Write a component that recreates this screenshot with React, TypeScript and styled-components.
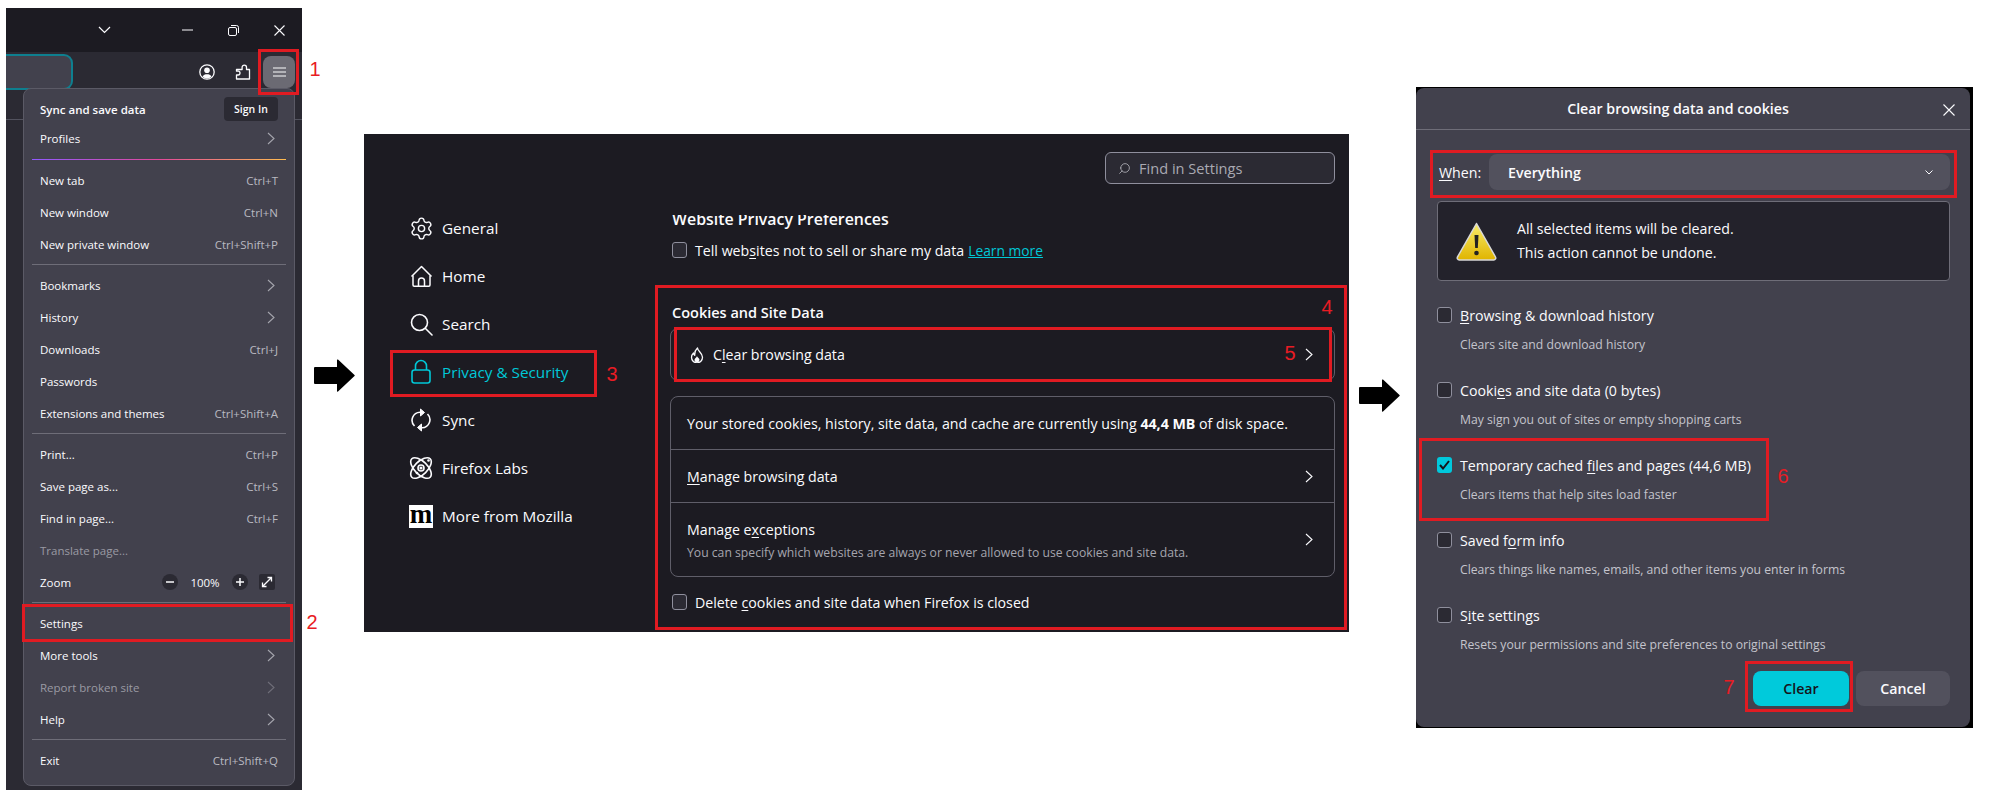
import React from "react"
import styled, { createGlobalStyle } from "styled-components"
import { Settings, Search } from "lucide-react"

const Global = createGlobalStyle`
    html, body { margin: 0; padding: 0; background: #fff; }
    * { box-sizing: border-box; }
    u { text-underline-offset: 2px; text-decoration-thickness: 1px; }
`

const Page = styled.div`
    position: relative;
    width: 1991px;
    height: 798px;
    overflow: hidden;
    display: flex;
    align-items: flex-start;
    padding-left: 6px;
    background: #fff;
    font-family: "Open Sans", "Noto Sans", sans-serif;
    color: #fbfbfe;
`

const Arrow = styled.svg<{ $left: number; $top: number }>`
    flex: none;
    width: 41px;
    height: 33px;
    margin-left: ${p => p.$left}px;
    margin-top: ${p => p.$top}px;
`

/* browser window with the open menu */
const Browser = styled.div`
    position: relative;
    flex: none;
    width: 296px;
    height: 782px;
    margin-top: 8px;
    background: #2b2a33;
`

const TitleBar = styled.div`
    height: 44px;
    background: #1c1b22;
    display: flex;
    justify-content: flex-end;
    align-items: center;
`

const WinButton = styled.div<{ $gap?: number }>`
    width: 46px;
    height: 44px;
    display: flex;
    align-items: center;
    justify-content: center;
    margin-right: ${p => p.$gap || 0}px;
`

const ToolBar = styled.div`
    height: 68px;
    display: flex;
    align-items: flex-start;
    gap: 4px;
    padding-right: 7px;
    border-bottom: 1px solid #52525e;
`

const UrlBar = styled.div`
    width: 67px;
    height: 36px;
    margin-top: 2px;
    margin-right: auto;
    background: #42414d;
    border: 2px solid #0e7f8f;
    border-left: 0;
    border-radius: 0 9px 9px 0;
`

const ToolButton = styled.div<{ $active?: boolean }>`
    width: 32px;
    height: 32px;
    margin-top: 4px;
    display: flex;
    align-items: center;
    justify-content: center;
    border-radius: 8px;
    background: ${p => p.$active ? "#6b6a73" : "transparent"};
`

const Menu = styled.div`
    position: absolute;
    left: 17px;
    top: 80px;
    width: 272px;
    height: 698px;
    padding: 7px 0 0;
    background: #42414d;
    border: 1px solid #5b5a66;
    border-radius: 8px;
    font-size: 11.5px;
`

const MenuRow = styled.div<{ $compact?: boolean; $muted?: boolean }>`
    height: ${p => p.$compact ? 29 : 32}px;
    padding: 0 16px 2px;
    display: flex;
    align-items: center;
    justify-content: space-between;
    color: ${p => p.$muted ? "#9a9aa3" : "#fbfbfe"};
`

const MenuGroup = styled.div`
    padding-bottom: 2px;
`

const Strong = styled.span`
    font-weight: 600;
`

const SignIn = styled.div`
    width: 54px;
    height: 24px;
    margin-top: -1px;
    background: #2b2a33;
    border-radius: 4px;
    font-size: 10.5px;
    font-weight: 600;
    display: flex;
    align-items: center;
    justify-content: center;
`

const Shortcut = styled.span`
    color: #b9b9c1;
`

const MenuChevron = styled.span`
    display: flex;
    margin-right: 3px;
`

const MenuSep = styled.div<{ $rainbow?: boolean }>`
    height: 1px;
    margin: 3px 8px 5px;
    background: ${p => p.$rainbow
        ? "linear-gradient(90deg, #9059ff, #e2489b 50%, #ffbd4f)"
        : "#6e6d78"};
`

const ZoomControls = styled.div`
    display: flex;
    align-items: center;
`

const RoundButton = styled.div`
    width: 16px;
    height: 16px;
    border-radius: 50%;
    background: #2b2a33;
    display: flex;
    align-items: center;
    justify-content: center;
`

const ZoomValue = styled.span`
    width: 54px;
    text-align: center;
`

const ExpandButton = styled.div`
    width: 16px;
    height: 16px;
    margin-left: 11px;
    margin-right: 3px;
    border-radius: 2px;
    background: #2b2a33;
    display: flex;
    align-items: center;
    justify-content: center;
`

/* settings page */
const SettingsPage = styled.div`
    flex: none;
    width: 985px;
    height: 498px;
    margin-left: 9px;
    margin-top: 134px;
    background: #1c1b22;
    display: flex;
`

const Sidebar = styled.div`
    flex: none;
    width: 308px;
    padding: 70px 0 0 46px;
`

const NavItem = styled.div<{ $active?: boolean }>`
    height: 48px;
    display: flex;
    align-items: center;
    gap: 10px;
    font-size: 15.3px;
    color: ${p => p.$active ? "#00c8d7" : "#fbfbfe"};
`

const NavIcon = styled.div`
    flex: none;
    width: 22px;
    height: 24px;
    display: flex;
    align-items: center;
    justify-content: center;
    svg { flex: none; }
`

const MozBox = styled.div`
    flex: none;
    width: 24px;
    height: 23px;
    background: #fff;
    color: #000;
    font-family: "Liberation Serif", serif;
    font-weight: 700;
    font-size: 27px;
    line-height: 19px;
    text-align: center;
`

const Content = styled.div`
    flex: 1;
    padding: 18px 14px 0 0;
    display: flex;
    flex-direction: column;
    font-size: 14.2px;
`

const FindBox = styled.div`
    align-self: flex-end;
    width: 230px;
    height: 32px;
    padding-left: 12px;
    display: flex;
    align-items: center;
    gap: 8px;
    background: #2b2a33;
    border: 1px solid #8f8f9d;
    border-radius: 6px;
    color: #a9a9b2;
    font-size: 14.6px;
`

const FindIcon = styled(Search)`
    transform: scaleX(-1);
`

const SectionTitle = styled.div<{ $top: number; $size?: number; $clip?: boolean }>`
    height: 22px;
    margin-top: ${p => p.$top}px;
    line-height: 22px;
    font-size: ${p => p.$size || 14.5}px;
    font-weight: 600;
    clip-path: ${p => p.$clip ? "inset(7px 0 0 0)" : "none"};
`

const CheckRow = styled.div<{ $top: number }>`
    height: 22px;
    margin-top: ${p => p.$top}px;
    display: flex;
    align-items: center;
    gap: 8px;
`

const Box = styled.div<{ $checked?: boolean }>`
    flex: none;
    width: 15px;
    height: 16px;
    border-radius: 3px;
    display: flex;
    align-items: center;
    justify-content: center;
    background: ${p => p.$checked ? "#00c8dc" : "#2b2a33"};
    border: ${p => p.$checked ? "0" : "1px solid #8f8f9d"};
`

const Link = styled.a`
    color: #00c8d7;
    font-size: 13.8px;
    text-decoration: underline;
    margin-left: 4px;
`

const Card = styled.div<{ $top: number }>`
    margin-top: ${p => p.$top}px;
    margin-left: -2px;
    border: 1px solid #5f5e69;
    border-radius: 8px;
`

const CardRow = styled.div<{ $height: number; $line?: boolean }>`
    height: ${p => p.$height}px;
    padding: 0 21px 0 16px;
    display: flex;
    align-items: center;
    justify-content: space-between;
    border-bottom: ${p => p.$line ? "1px solid #5f5e69" : "0"};
`

const CardLabel = styled.div`
    display: flex;
    align-items: center;
    gap: 9px;
    padding-left: 3px;
`

const CardStack = styled.div`
    padding-top: 2px;
`

const Bold = styled.b`
    font-weight: 700;
`

const CardSub = styled.div`
    margin-top: 5px;
    font-size: 12.2px;
    color: #a5a5ae;
`

/* clear data dialog */
const DialogFrame = styled.div`
    flex: none;
    width: 557px;
    height: 641px;
    margin-left: 16px;
    margin-top: 87px;
    padding: 1px 3px 1px 0;
    background: #000;
`

const Dialog = styled.div`
    height: 100%;
    background: #42414d;
    border-radius: 8px;
    display: flex;
    flex-direction: column;
    font-size: 14.2px;
`

const DialogHead = styled.div`
    position: relative;
    flex: none;
    height: 42px;
    padding-right: 30px;
    display: flex;
    align-items: center;
    justify-content: center;
    border-bottom: 1px solid #6e6d78;
    font-size: 14.2px;
    font-weight: 600;
`

const CloseIcon = styled.svg`
    position: absolute;
    right: 15px;
    top: 16px;
`

const DialogBody = styled.div`
    flex: 1;
    padding: 24px 20px 0 21px;
    display: flex;
    flex-direction: column;
`

const WhenRow = styled.div`
    display: flex;
    align-items: center;
    height: 36px;
`

const WhenLabel = styled.span`
    width: 52px;
    padding-left: 2px;
`

const Select = styled.div`
    flex: 1;
    height: 36px;
    padding: 0 17px 0 19px;
    display: flex;
    align-items: center;
    justify-content: space-between;
    background: #52515d;
    border-radius: 8px;
    font-weight: 600;
`

const Warning = styled.div`
    height: 80px;
    margin-top: 11px;
    padding-left: 18px;
    display: flex;
    align-items: center;
    gap: 20px;
    background: #23222b;
    border: 1px solid #6e6d78;
    border-radius: 4px;
    line-height: 24px;
`

const ClearList = styled.div`
    margin-top: 23px;
    display: flex;
    flex-direction: column;
    gap: 26px;
`

const ClearItem = styled.div`
    height: 49px;
`

const ClearLabel = styled.div`
    height: 22px;
    display: flex;
    align-items: center;
    gap: 8px;
`

const ClearSub = styled.div`
    height: 18px;
    margin-top: 10px;
    margin-left: 23px;
    line-height: 18px;
    font-size: 12.2px;
    color: #c4c4cc;
`

const Buttons = styled.div`
    margin-top: 18px;
    display: flex;
    justify-content: flex-end;
    gap: 7px;
`

const Button = styled.div<{ $primary?: boolean }>`
    width: ${p => p.$primary ? 96 : 94}px;
    height: 35px;
    border-radius: 8px;
    display: flex;
    align-items: center;
    justify-content: center;
    font-weight: 600;
    background: ${p => p.$primary ? "#00cadb" : "#52515d"};
    color: ${p => p.$primary ? "#15141a" : "#fbfbfe"};
`

/* red annotations drawn on top of the screenshots */
const RedBox = styled.div<{ $x: number; $y: number; $w: number; $h: number }>`
    position: absolute;
    left: ${p => p.$x}px;
    top: ${p => p.$y}px;
    width: ${p => p.$w}px;
    height: ${p => p.$h}px;
    border: 3px solid #e01b22;
`

const Marker = styled.span<{ $x: number; $y: number }>`
    position: absolute;
    left: ${p => p.$x}px;
    top: ${p => p.$y}px;
    transform: translate(-50%, -50%);
    font-family: "Liberation Sans", Arial, sans-serif;
    font-size: 20px;
    line-height: 20px;
    color: #e81c24;
`

const redBoxes = [
    [258, 49, 41, 46],
    [22, 604, 271, 38],
    [390, 350, 207, 47],
    [655, 285, 692, 345],
    [674, 327, 658, 55],
    [1430, 150, 527, 48],
    [1419, 438, 350, 83],
    [1745, 661, 108, 51],
]

const markers = [
    ["1", 315, 69],
    ["2", 312, 622],
    ["3", 612, 374],
    ["4", 1327, 307],
    ["5", 1290, 353],
    ["6", 1783, 476],
    ["7", 1729, 687],
] as const

const Chevron = ({ color = "#a5a5ad", w = 8, h = 13 }: { color?: string; w?: number; h?: number }) => (
    <svg width={w} height={h} viewBox="0 0 8 13" fill="none">
        <path d="M1 1l6 5.5L1 12" stroke={color} strokeWidth="1.1" />
    </svg>
)

const ArrowShape = () => <path d="M1 8h22V1q0-1 1-.4L40.5 16a.7.7 0 0 1 0 1L24 32.4q-1 .6-1-.4V25H1q-1 0-1-1V9q0-1 1-1z" fill="#000" />

const ShortcutRow = ({ label, keys, muted }: { label: string; keys?: string; muted?: boolean }) => (
    <MenuRow $muted={muted}>
        <span>{label}</span>
        {keys && <Shortcut>{keys}</Shortcut>}
    </MenuRow>
)

const SubmenuRow = ({ label, muted, compact }: { label: string; muted?: boolean; compact?: boolean }) => (
    <MenuRow $muted={muted} $compact={compact}>
        <span>{label}</span>
        <MenuChevron><Chevron color={muted ? "#6f6e79" : "#a5a5ad"} /></MenuChevron>
    </MenuRow>
)

const GeneralIcon = () => <Settings size={25} strokeWidth={1.35} color="#fbfbfe" />

const HomeIcon = () => (
    <svg width="23" height="23" viewBox="0 0 23 23" fill="none" stroke="#fbfbfe" strokeWidth="1.5" strokeLinejoin="round">
        <path d="M1.5 11.5L11.5 1.5l10 10" />
        <path d="M3 10.5V20a1.2 1.2 0 0 0 1.2 1.2h14.6A1.2 1.2 0 0 0 20 20v-9.500" />
        <path d="M8.500 21v-5a3 3 0 0 1 6 0v5" />
    </svg>
)

const SearchIcon = () => (
    <svg width="23" height="23" viewBox="0 0 23 23" fill="none" stroke="#fbfbfe" strokeWidth="1.6">
        <circle cx="9.500" cy="9.500" r="8" />
        <path d="M15.500 15.500l6.500 6.500" strokeLinecap="round" />
    </svg>
)

const LockIcon = () => (
    <svg width="22" height="26" viewBox="0 0 22 26" fill="none" stroke="#00c8d7" strokeWidth="1.6">
        <path d="M5.500 11V7a5.500 5.500 0 0 1 11 0v4" />
        <rect x="2" y="11" width="18" height="13" rx="2.500" />
    </svg>
)

const SyncIcon = () => (
    <svg width="22" height="24" viewBox="0 0 22 24" fill="none" stroke="#fbfbfe" strokeWidth="1.6">
        <path d="M4.500 18A8 8 0 0 1 10 4.300" />
        <path d="M17.500 6A8 8 0 0 1 12 19.700" />
        <path d="M10.500 1v7l4-3.500z" fill="#fbfbfe" strokeWidth="1" strokeLinejoin="round" />
        <path d="M11.500 23v-7l-4 3.500z" fill="#fbfbfe" strokeWidth="1" strokeLinejoin="round" />
    </svg>
)

const LabsIcon = () => (
    <svg width="24" height="24" viewBox="0 0 24 24" fill="none" stroke="#fbfbfe" strokeWidth="1.6">
        <ellipse cx="12" cy="12" rx="13" ry="6.500" transform="rotate(45 12 12)" />
        <ellipse cx="12" cy="12" rx="13" ry="6.500" transform="rotate(-45 12 12)" />
        <circle cx="12" cy="12" r="3" />
        <circle cx="12" cy="12" r="0.800" fill="#fbfbfe" />
        <circle cx="19.500" cy="4.500" r="1.300" fill="#fbfbfe" stroke="none" />
        <circle cx="8" cy="17" r="1.300" fill="#fbfbfe" stroke="none" />
    </svg>
)

const FlameIcon = () => (
    <svg width="14" height="16" viewBox="0 0 14 16" fill="none" stroke="#fbfbfe" strokeWidth="1.300" strokeLinejoin="round">
        <path d="M7.500 1C7.500 4 12.500 6 12.500 10.300A5.400 5.400 0 0 1 1.500 10.300C1.500 8.500 2.500 7 3.500 6C3.500 7.200 4 8 4.800 8.300C4.500 5.500 5.500 2.800 7.500 1Z" />
        <path d="M7 9C7 10.500 9.500 11 9.500 12.800A2.500 2.500 0 0 1 4.500 12.800C4.500 11.500 6.500 10.800 7 9Z" fill="#fbfbfe" stroke="none" />
    </svg>
)

const WarnIcon = () => (
    <svg width="41" height="39" viewBox="0 0 41 39" style={{ flex: "none" }}>
        <defs>
            <linearGradient id="warn" x1="0" y1="0" x2="0" y2="1">
                <stop offset="0" stopColor="#f8ec6a" />
                <stop offset="1" stopColor="#e0b400" />
            </linearGradient>
        </defs>
        <path d="M20.500 1.500L39.500 35a2 2 0 0 1-1.700 3H3.200a2 2 0 0 1-1.700-3z" fill="url(#warn)" stroke="#d8d8d8" strokeWidth="1.500" strokeLinejoin="round" />
        <path d="M18.500 13h4l-.7 13h-2.600z" fill="#222" />
        <circle cx="20.500" cy="31" r="2.300" fill="#222" />
    </svg>
)

const clearItems = [
    { label: <><u>B</u>rowsing &amp; download history</>, sub: "Clears site and download history" },
    { label: <>Cooki<u>e</u>s and site data (0 bytes)</>, sub: "May sign you out of sites or empty shopping carts" },
    { label: <>Temporary cached <u>f</u>iles and pages (44,6 MB)</>, sub: "Clears items that help sites load faster", checked: true },
    { label: <>Saved f<u>o</u>rm info</>, sub: "Clears things like names, emails, and other items you enter in forms" },
    { label: <>S<u>i</u>te settings</>, sub: "Resets your permissions and site preferences to original settings" },
]

const App = () => (
    <Page>
        <Global />

        <Browser>
            <TitleBar>
                <WinButton $gap={37}>
                    <svg width="13" height="8" viewBox="0 0 13 8" fill="none"><path d="M1 1l5.500 5.500L12 1" stroke="#fbfbfe" strokeWidth="1.200" /></svg>
                </WinButton>
                <WinButton>
                    <svg width="11" height="2" viewBox="0 0 11 2"><path d="M0 1h11" stroke="#fbfbfe" /></svg>
                </WinButton>
                <WinButton>
                    <svg width="11" height="11" viewBox="0 0 11 11" fill="none" stroke="#fbfbfe"><rect x=".5" y="2.500" width="8" height="8" rx="1.500" /><path d="M3 .5h5.500a2 2 0 0 1 2 2V8" /></svg>
                </WinButton>
                <WinButton>
                    <svg width="11" height="11" viewBox="0 0 11 11"><path d="M.5.5l10 10M10.500.5l-10 10" stroke="#fbfbfe" strokeWidth="1.100" /></svg>
                </WinButton>
            </TitleBar>
            <ToolBar>
                <UrlBar />
                <ToolButton>
                    <svg width="16" height="16" viewBox="0 0 16 16" fill="none">
                        <circle cx="8" cy="8" r="7.200" stroke="#fbfbfe" strokeWidth="1.300" />
                        <circle cx="8" cy="6.300" r="2.800" fill="#fbfbfe" />
                        <path d="M3.500 12.500C4.500 10.800 6 10.300 8 10.300s3.500.5 4.500 2.200A6 6 0 0 1 3.500 12.500z" fill="#fbfbfe" />
                    </svg>
                </ToolButton>
                <ToolButton>
                    <svg width="16" height="16" viewBox="0 0 16 16" fill="none">
                        <path d="M1.500 15v-4h1.600a1.900 1.900 0 0 0 0-3.800H1.500V5.500h5.600V3.300a2.200 2.200 0 0 1 4.400 0V5.500h3V15z" stroke="#fbfbfe" strokeWidth="1.300" strokeLinejoin="round" />
                    </svg>
                </ToolButton>
                <ToolButton $active>
                    <svg width="13" height="10" viewBox="0 0 13 10"><path d="M0 1h13M0 5h13M0 9h13" stroke="#fbfbfe" strokeWidth="1.200" /></svg>
                </ToolButton>
            </ToolBar>

            <Menu>
                <MenuGroup>
                    <MenuRow $compact>
                        <Strong>Sync and save data</Strong>
                        <SignIn>Sign In</SignIn>
                    </MenuRow>
                    <SubmenuRow label="Profiles" compact />
                </MenuGroup>
                <MenuSep $rainbow />
                <ShortcutRow label="New tab" keys="Ctrl+T" />
                <ShortcutRow label="New window" keys="Ctrl+N" />
                <ShortcutRow label="New private window" keys="Ctrl+Shift+P" />
                <MenuSep />
                <SubmenuRow label="Bookmarks" />
                <SubmenuRow label="History" />
                <ShortcutRow label="Downloads" keys="Ctrl+J" />
                <ShortcutRow label="Passwords" />
                <ShortcutRow label="Extensions and themes" keys="Ctrl+Shift+A" />
                <MenuSep />
                <ShortcutRow label="Print..." keys="Ctrl+P" />
                <ShortcutRow label="Save page as..." keys="Ctrl+S" />
                <ShortcutRow label="Find in page..." keys="Ctrl+F" />
                <ShortcutRow label="Translate page..." muted />
                <MenuRow>
                    <span>Zoom</span>
                    <ZoomControls>
                        <RoundButton>
                            <svg width="8" height="8" viewBox="0 0 8 8"><path d="M0 4h8" stroke="#fbfbfe" strokeWidth="1.500" /></svg>
                        </RoundButton>
                        <ZoomValue>100%</ZoomValue>
                        <RoundButton>
                            <svg width="8" height="8" viewBox="0 0 8 8"><path d="M0 4h8M4 0v8" stroke="#fbfbfe" strokeWidth="1.500" /></svg>
                        </RoundButton>
                        <ExpandButton>
                            <svg width="12" height="12" viewBox="0 0 12 12" fill="none" stroke="#fbfbfe" strokeWidth="1.300">
                                <path d="M2 10l8-8M6.500 1.500h4v4M1.500 6.500v4h4" />
                            </svg>
                        </ExpandButton>
                    </ZoomControls>
                </MenuRow>
                <MenuSep />
                <ShortcutRow label="Settings" />
                <SubmenuRow label="More tools" />
                <SubmenuRow label="Report broken site" muted />
                <SubmenuRow label="Help" />
                <MenuSep />
                <ShortcutRow label="Exit" keys="Ctrl+Shift+Q" />
            </Menu>
        </Browser>

        <Arrow $left={12} $top={359} viewBox="0 0 41 33"><ArrowShape /></Arrow>

        <SettingsPage>
            <Sidebar>
                <NavItem><NavIcon><GeneralIcon /></NavIcon>General</NavItem>
                <NavItem><NavIcon><HomeIcon /></NavIcon>Home</NavItem>
                <NavItem><NavIcon><SearchIcon /></NavIcon>Search</NavItem>
                <NavItem $active><NavIcon><LockIcon /></NavIcon>Privacy &amp; Security</NavItem>
                <NavItem><NavIcon><SyncIcon /></NavIcon>Sync</NavItem>
                <NavItem><NavIcon><LabsIcon /></NavIcon>Firefox Labs</NavItem>
                <NavItem><NavIcon><MozBox>m</MozBox></NavIcon>More from Mozilla</NavItem>
            </Sidebar>
            <Content>
                <FindBox>
                    <FindIcon size={13} strokeWidth={1.500} color="#b5b5bd" />
                    Find in Settings
                </FindBox>
                <SectionTitle $top={24} $size={15.9} $clip>Website Privacy Preferences</SectionTitle>
                <CheckRow $top={9}>
                    <Box />
                    <span>Tell web<u>s</u>ites not to sell or share my data<Link>Learn more</Link></span>
                </CheckRow>
                <SectionTitle $top={41}>Cookies and Site Data</SectionTitle>
                <Card $top={4}>
                    <CardRow $height={51}>
                        <CardLabel><FlameIcon /><span>C<u>l</u>ear browsing data</span></CardLabel>
                        <Chevron color="#fbfbfe" />
                    </CardRow>
                </Card>
                <Card $top={15}>
                    <CardRow $height={53} $line>
                        <span>Your stored cookies, history, site data, and cache are currently using <Bold>44,4 MB</Bold> of disk space.</span>
                    </CardRow>
                    <CardRow $height={53} $line>
                        <span><u>M</u>anage browsing data</span>
                        <Chevron color="#fbfbfe" />
                    </CardRow>
                    <CardRow $height={73}>
                        <CardStack>
                            <div>Manage e<u>x</u>ceptions</div>
                            <CardSub>You can specify which websites are always or never allowed to use cookies and site data.</CardSub>
                        </CardStack>
                        <Chevron color="#fbfbfe" />
                    </CardRow>
                </Card>
                <CheckRow $top={14}>
                    <Box />
                    <span>Delete <u>c</u>ookies and site data when Firefox is closed</span>
                </CheckRow>
            </Content>
        </SettingsPage>

        <Arrow $left={10} $top={379} viewBox="0 0 41 33"><ArrowShape /></Arrow>

        <DialogFrame>
            <Dialog>
                <DialogHead>
                    Clear browsing data and cookies
                    <CloseIcon width="12" height="12" viewBox="0 0 12 12">
                        <path d="M.5.5l11 11M11.500.5l-11 11" stroke="#fbfbfe" strokeWidth="1.100" />
                    </CloseIcon>
                </DialogHead>
                <DialogBody>
                    <WhenRow>
                        <WhenLabel><u>W</u>hen:</WhenLabel>
                        <Select>
                            Everything
                            <svg width="8" height="5" viewBox="0 0 8 5" fill="none"><path d="M.5.5L4 4 7.500.5" stroke="#fbfbfe" /></svg>
                        </Select>
                    </WhenRow>
                    <Warning>
                        <WarnIcon />
                        <div>
                            <div>All selected items will be cleared.</div>
                            <div>This action cannot be undone.</div>
                        </div>
                    </Warning>
                    <ClearList>
                        {clearItems.map((item, i) => (
                            <ClearItem key={i}>
                                <ClearLabel>
                                    <Box $checked={item.checked}>
                                        {item.checked && <svg width="11" height="10" viewBox="0 0 11 10" fill="none"><path d="M1 5l3 3.500L10 1" stroke="#15141a" strokeWidth="2" /></svg>}
                                    </Box>
                                    <span>{item.label}</span>
                                </ClearLabel>
                                <ClearSub>{item.sub}</ClearSub>
                            </ClearItem>
                        ))}
                    </ClearList>
                    <Buttons>
                        <Button $primary>Clear</Button>
                        <Button>Cancel</Button>
                    </Buttons>
                </DialogBody>
            </Dialog>
        </DialogFrame>

        {redBoxes.map(([x, y, w, h], i) => <RedBox key={i} $x={x} $y={y} $w={w} $h={h} />)}
        {markers.map(([n, x, y]) => <Marker key={n} $x={x} $y={y}>{n}</Marker>)}
    </Page>
)

export default App
